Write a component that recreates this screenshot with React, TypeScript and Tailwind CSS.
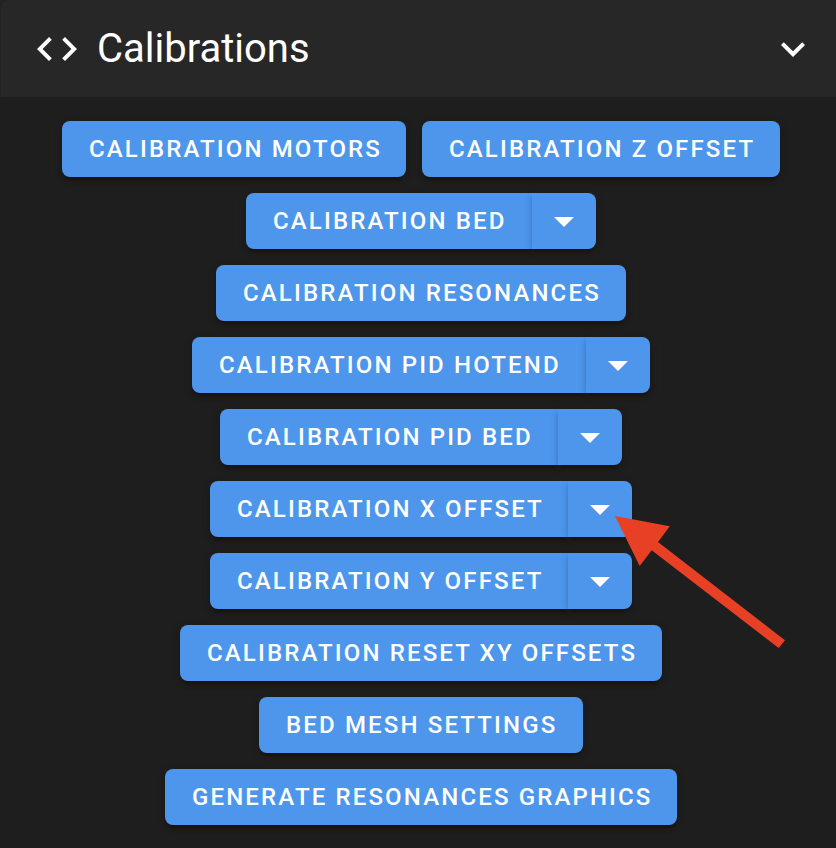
import React from "react";

type Item = { label: string; w: string; menu?: boolean };

const rows: Item[][] = [
  [
    { label: "CALIBRATION MOTORS", w: "w-[344px]" },
    { label: "CALIBRATION Z OFFSET", w: "w-[358px]" },
  ],
  [{ label: "CALIBRATION BED", w: "w-[286px]", menu: true }],
  [{ label: "CALIBRATION RESONANCES", w: "w-[410px]" }],
  [{ label: "CALIBRATION PID HOTEND", w: "w-[394px]", menu: true }],
  [{ label: "CALIBRATION PID BED", w: "w-[338px]", menu: true }],
  [{ label: "CALIBRATION X OFFSET", w: "w-[358px]", menu: true }],
  [{ label: "CALIBRATION Y OFFSET", w: "w-[358px]", menu: true }],
  [{ label: "CALIBRATION RESET XY OFFSETS", w: "w-[482px]" }],
  [{ label: "BED MESH SETTINGS", w: "w-[324px]" }],
  [{ label: "GENERATE RESONANCES GRAPHICS", w: "w-[512px]" }],
];

const shadow =
  "shadow-[0_6px_2px_-4px_rgba(0,0,0,0.2),0_4px_4px_0_rgba(0,0,0,0.14),0_2px_10px_0_rgba(0,0,0,0.12)]";

function MacroButton({ item }: { item: Item }) {
  return (
    <div className="flex h-14">
      <button
        className={`${item.w} ${shadow} h-14 shrink-0 bg-[#4d96ec] pl-[27px] text-left text-[24px] leading-[56px] font-medium tracking-[2.143px] whitespace-nowrap text-white ${item.menu ? "rounded-l-[8px]" : "rounded-[8px]"}`}
      >
        {item.label}
      </button>
      {item.menu && (
        <button className={`${shadow} flex h-14 w-16 items-center justify-center rounded-r-[8px] bg-[#4d96ec]`}>
          <svg width="20" height="10" viewBox="0 0 20 10" className="mt-[2px]">
            <path d="M0 0h20L10 10z" fill="#fff" />
          </svg>
        </button>
      )}
    </div>
  );
}

export default function App() {
  return (
    <main className="relative h-[848px] w-[836px] overflow-hidden bg-[#1e1e1e] font-[Roboto,sans-serif] text-white">
      <div className="bg-[#222222] pl-px">
        <header className="flex h-[97px] items-center rounded-tl-[8px] bg-[#272727] pr-[19px] pl-[32px]">
          <svg width="48" height="48" viewBox="0 0 24 24" fill="#fff">
            <path d="M14.6 16.6l4.6-4.6-4.6-4.6L16 6l6 6-6 6-1.4-1.4m-5.2 0L4.8 12l4.6-4.6L8 6l-6 6 6 6 1.4-1.4z" />
          </svg>
          <h1 className="ml-4 text-[40px] leading-[48px] font-normal">Calibrations</h1>
          <svg className="ml-auto" width="48" height="48" viewBox="0 0 24 24" fill="#fff">
            <path d="M7.41 8.58 12 13.17l4.59-4.59L18 10l-6 6-6-6z" />
          </svg>
        </header>
      </div>
      <section className="flex flex-col items-center gap-4 pt-6 pl-[6px]">
        {rows.map((row) => (
          <div key={row[0].label} className="flex gap-4">
            {row.map((item) => (
              <MacroButton key={item.label} item={item} />
            ))}
          </div>
        ))}
      </section>
      <svg className="absolute top-[505px] left-[605px]" width="190" height="150" viewBox="605 505 190 150">
        <path d="M615 516 669.8 526.3 658 542 785 640.3 778.7 648 651.7 550.3 639.7 566z" fill="#e84025" />
      </svg>
    </main>
  );
}
